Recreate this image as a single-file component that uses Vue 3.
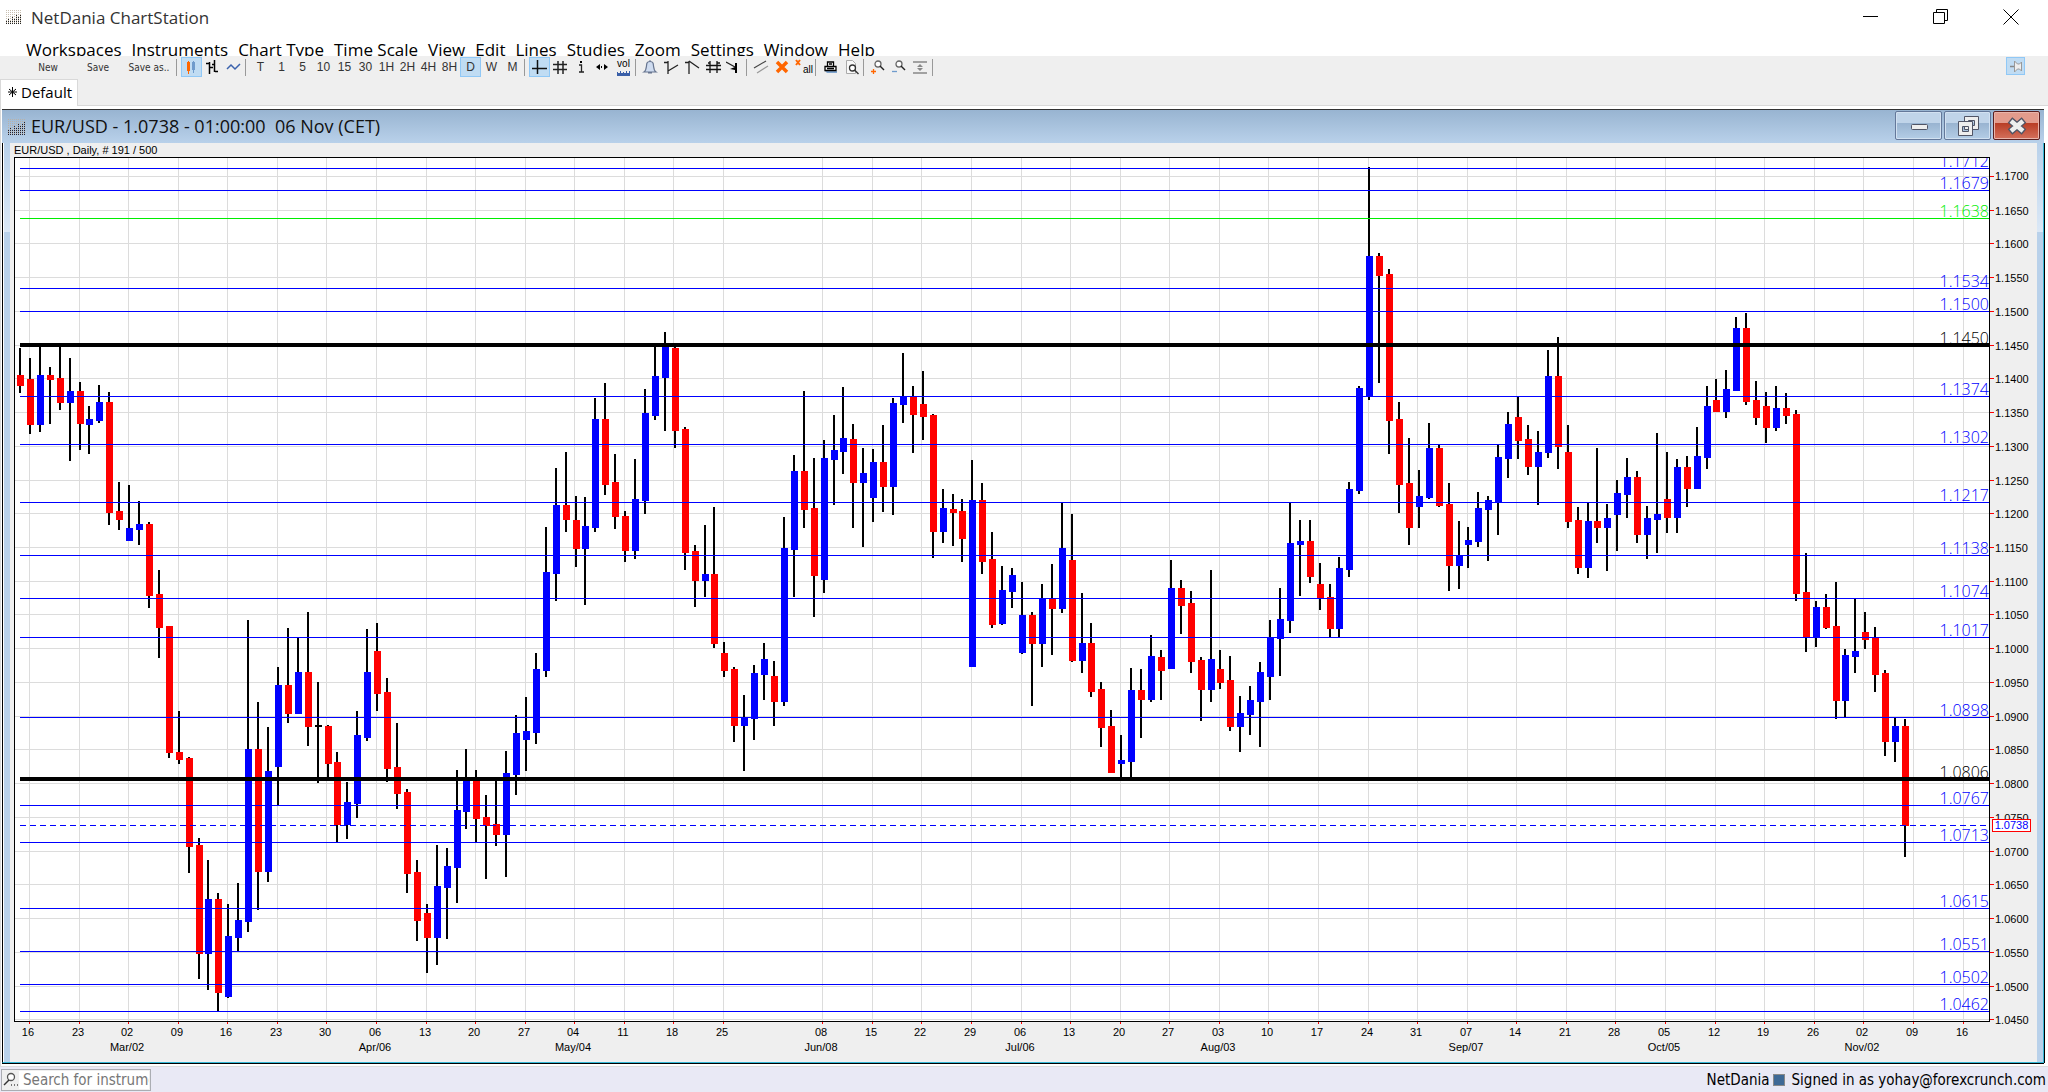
<script setup>
import { ref } from 'vue'

const menus = ['Workspaces', 'Instruments', 'Chart Type', 'Time Scale', 'View', 'Edit', 'Lines', 'Studies', 'Zoom', 'Settings', 'Window', 'Help']
const scales = ['T', '1', '5', '10', '15', '30', '1H', '2H', '4H', '8H', 'D', 'W', 'M']
const scale = ref('D')
const search = ref('')

// dotted bars of the application logo
const logoBars = [3, 5, 4, 7, 6, 9, 8, 9]

// plot area in chart units
const plot = { left: 15, top: 158, width: 1974, height: 863 }
const viewBox = `${plot.left} ${plot.top} ${plot.width} ${plot.height}`

const priceY = (price) => Math.round(176 + (1.17 - price) * 6746)
const candleX = (i) => Math.floor(19.5 + i * 9.921)
const weekX = (k) => Math.floor(29.42 + k * 49.58)
const topPct = (y) => ((y - plot.top) / plot.height) * 100 + '%'
const bottomPct = (y) => ((plot.top + plot.height - y) / plot.height) * 100 + '%'
const leftPct = (x) => ((x - plot.left) / plot.width) * 100 + '%'

const ticks = []
for (let p = 11700; p >= 10450; p -= 50) {
  ticks.push({ label: (p / 10000).toFixed(4), y: priceY(p / 10000) })
}

const days = '16 23 02 09 16 23 30 06 13 20 27 04 11 18 25 01 08 15 22 29 06 13 20 27 03 10 17 24 31 07 14 21 28 05 12 19 26 02 09 16'.split(' ')
const months = { 2: 'Mar/02', 7: 'Apr/06', 11: 'May/04', 16: 'Jun/08', 20: 'Jul/06', 24: 'Aug/03', 29: 'Sep/07', 33: 'Oct/05', 37: 'Nov/02' }
// the first week of June carries no grid line
const weeks = days
  .map((day, k) => ({ day, month: months[k], x: weekX(k), k }))
  .filter((w) => w.k !== 15)

const levels = [
  1.1712, 1.1679, 1.1638, 1.1534, 1.15, 1.145, 1.1374, 1.1302, 1.1217, 1.1138, 1.1074,
  1.1017, 1.0898, 1.0806, 1.0767, 1.0713, 1.0615, 1.0551, 1.0502, 1.0462
].map((price) => ({
  label: price.toFixed(4),
  y: priceY(price),
  kind: price === 1.1638 ? 'green' : price === 1.145 || price === 1.0806 ? 'major' : 'blue'
}))

const last = { label: '1.0738', y: 825 }

// direction, high, body top, body bottom, low
const candles = `
r 348 375 386 393|r 358 379 425 434|b 345 375 425 432|r 367 375 380 424|r 345 378 403 410
b 358 391 403 461|r 382 391 424 450|b 406 419 425 454|b 385 402 421 423|r 392 402 513 525
r 482 511 520 530|b 485 528 541 541|b 501 524 530 545|r 522 524 596 608|r 570 594 628 658
r 626 626 753 758|r 711 752 760 764|r 757 758 847 873|r 838 845 954 979|b 860 899 954 990
r 893 899 993 1011|b 904 936 997 998|b 883 920 938 951|b 620 749 922 932|r 702 749 872 910
b 727 771 872 882|b 667 685 767 805|r 628 685 714 723|b 637 672 714 714|r 612 672 727 746
k 682 725 727 783|r 725 726 764 778|r 752 762 825 842|b 782 802 825 839|b 711 735 804 818
b 629 672 738 741|r 623 651 694 711|r 678 692 769 782|r 723 767 794 809|r 789 792 874 893
r 860 872 921 941|r 904 913 938 973|b 845 886 938 965|b 848 866 888 939|b 770 810 868 903
b 749 780 812 829|r 770 780 819 842|r 795 817 826 879|r 780 824 835 846|b 751 773 835 877
b 715 733 775 795|b 697 731 740 771|b 653 669 733 744|b 527 572 671 677|b 468 505 574 601
r 452 505 520 532|r 496 520 549 567|b 497 526 549 605|b 398 419 528 532|r 383 419 485 495
r 454 482 517 529|r 511 516 551 562|b 459 499 551 559|b 389 413 501 514|b 347 376 416 420
b 332 346 378 431|r 347 348 431 448|r 427 429 553 570|r 545 551 581 607|b 525 574 581 597
r 507 574 644 648|r 642 653 671 677|r 667 669 726 742|b 695 717 726 771|b 665 673 719 740
b 643 659 675 700|r 661 676 702 726|b 517 548 702 706|b 455 471 550 597|r 391 471 510 528
r 458 508 576 617|b 440 458 580 593|b 415 450 460 505|b 387 438 452 474|r 424 439 483 528
b 448 473 483 547|b 449 462 498 522|r 425 462 487 512|b 398 403 487 515|b 353 396 405 423
r 386 396 415 453|r 371 404 417 440|r 414 415 532 558|b 489 508 532 543|r 494 509 513 546
r 499 511 539 562|b 460 500 667 667|r 483 500 562 574|r 532 559 625 628|b 566 590 624 625
b 568 575 592 608|b 582 615 653 654|r 612 615 644 706|b 584 598 644 667|r 564 598 609 655
b 503 548 609 613|r 514 560 661 662|b 593 643 661 673|r 623 643 692 697|r 682 689 728 747
r 710 726 773 773|b 735 760 764 778|b 668 690 762 778|r 669 690 700 738|b 635 656 700 702
r 650 657 671 700|b 560 588 669 669|r 580 588 606 634|r 591 603 662 673|r 657 660 690 721
b 570 659 690 702|r 650 669 683 689|r 656 680 727 731|b 696 713 727 752|b 686 700 715 735
b 662 672 702 747|b 620 637 677 700|b 588 619 639 676|b 503 543 621 633|b 520 541 545 596
r 520 541 577 583|r 563 584 598 610|r 584 597 629 637|b 557 568 629 637|b 482 489 570 577
b 386 388 491 494|b 167 256 396 400|r 253 256 276 383|r 269 274 421 454|r 402 419 485 513
r 438 483 528 545|b 470 496 507 528|b 423 448 498 499|r 444 448 506 507|r 483 504 566 591
b 521 555 566 589|b 527 540 545 568|b 492 508 542 547|b 496 500 510 561|b 444 457 502 535
b 412 424 459 478|r 397 417 441 459|r 425 439 467 475|b 431 452 467 505|b 350 376 453 458
r 337 376 447 469|r 425 452 522 528|r 507 520 568 574|b 502 521 568 578|r 448 521 528 543
b 504 518 528 571|b 480 493 515 551|b 458 477 495 518|r 471 477 535 543|b 506 518 535 559
b 433 514 520 553|r 452 499 518 533|b 459 467 518 533|r 456 467 489 507|b 427 456 489 489
b 386 406 458 469|r 379 400 412 412|b 370 389 412 418|b 317 328 391 391|r 313 328 402 405
r 381 400 418 425|r 392 406 428 443|b 386 408 428 431|r 393 408 416 424|r 410 414 594 601
r 553 592 637 652|b 601 607 637 647|r 594 607 628 629|r 582 626 701 719|b 649 655 701 717
b 598 651 657 673|r 612 632 640 649|r 627 637 675 692|r 670 673 742 756|b 717 726 742 762
r 719 726 826 857`
  .trim()
  .split(/[|\n]/)
  .map((row, i) => {
    const [dir, high, top, bottom, low] = row.split(' ')
    return { dir, x: candleX(i), high: +high, top: +top, height: bottom - top, range: low - high }
  })
</script>

<template>
  <div class="app">
    <header class="title-bar">
      <svg class="logo" width="16" height="14" viewBox="0 0 16 14">
        <g v-for="(bar, i) in logoBars" :key="i" stroke-dasharray="1 1">
          <path :d="`M${i * 2 + 0.5} 0V14`" stroke="#c9c0b2" />
          <path :d="`M${i * 2 + 0.5} 14V${14 - bar}`" stroke="#222" />
        </g>
      </svg>
      <h1>NetDania ChartStation</h1>
      <div class="caption-buttons">
        <button aria-label="Minimize"><svg width="16" height="16" viewBox="0 0 16 16"><path d="M0 7.500h15" /></svg></button>
        <button aria-label="Restore"><svg width="16" height="16" viewBox="0 0 16 16"><path d="M.5 3.500h11v11h-11zM3.500 3.500v-3h11v11h-3" /></svg></button>
        <button aria-label="Close"><svg width="16" height="16" viewBox="0 0 16 16"><path d="M.5.5l15 15M15.500.5l-15 15" /></svg></button>
      </div>
    </header>

    <nav class="menu-bar">
      <button v-for="menu in menus" :key="menu">{{ menu }}</button>
    </nav>

    <div class="toolbar">
      <button class="text-btn">New</button>
      <button class="text-btn">Save</button>
      <button class="text-btn">Save as..</button>
      <span class="sep"></span>
      <button class="tool active" aria-label="Candlestick">
        <svg viewBox="0 0 17 16"><path d="M5.500 2v13" stroke="#f60" /><path d="M4 3h3v9H4z" fill="#f60" /><path d="M10.500 2v12" stroke="#6f9bcc" /><path d="M9 3h3v8H9z" fill="#6f9bcc" /></svg>
      </button>
      <button class="tool" aria-label="Bar chart">
        <svg viewBox="0 0 17 16"><path d="M5.500 3v12M2 4.500h3M6 8.500h3M10.500 1v12M8 5.500h2M11 12.500h3" stroke="#000" stroke-width="1.500" fill="none" /></svg>
      </button>
      <button class="tool" aria-label="Line chart">
        <svg viewBox="0 0 17 16"><path d="M2 10L6 6l4 4 5-5" stroke="#3a62ad" stroke-width="1.500" fill="none" /></svg>
      </button>
      <span class="sep"></span>
      <button v-for="s in scales" :key="s" :class="['tool', { active: s === scale }]" @click="scale = s">{{ s }}</button>
      <span class="sep"></span>
      <button class="tool active" aria-label="Crosshair">
        <svg viewBox="0 0 17 16"><path d="M6.500 1v14M1 9.500h15" stroke="#111" stroke-width="1.500" /></svg>
      </button>
      <button class="tool" aria-label="Grid">
        <svg viewBox="0 0 17 16"><path d="M6 2v13M11 2v13M1 5.500h14M1 10.500h14" stroke="#222" stroke-width="1.500" /></svg>
      </button>
      <button class="tool" aria-label="Info">
        <svg viewBox="0 0 17 16"><path d="M6 6h2.500v7M6 13h5" stroke="#222" stroke-width="1.300" fill="none" /><path d="M7 2h2v2H7z" /></svg>
      </button>
      <button class="tool" aria-label="Scroll">
        <svg viewBox="0 0 17 16"><path d="M2 8l4-3v6zM14 8l-4-3v6zM7 7h1v2H7z" /></svg>
      </button>
      <button class="tool" aria-label="Volume">
        <span class="tiny">vol</span>
        <svg class="vol" viewBox="0 0 13 5"><path d="M0 5V1h1v1h2V0h1v2h2V1h1v1h2V0h1v2h2V0h1v5z" fill="#3a5fa8" /></svg>
      </button>
      <span class="sep"></span>
      <button class="tool" aria-label="Alert">
        <svg viewBox="0 0 17 16"><path d="M2 13c3-2 2-6 3-9 1-2 5-2 6 0 1 3 0 7 3 9zM6 14h4" fill="#cfdcf0" stroke="#67758f" stroke-width="1.200" /><path d="M8 1v2" stroke="#67758f" /></svg>
      </button>
      <button class="tool" aria-label="Trend up">
        <svg viewBox="0 0 17 16"><path d="M5 2v13M1 3.500h4M5 12l10-6" stroke="#222" stroke-width="1.300" /></svg>
      </button>
      <button class="tool" aria-label="Trend down">
        <svg viewBox="0 0 17 16"><path d="M5 2v13M1 3.500h4M5 2l10 7" stroke="#222" stroke-width="1.300" /></svg>
      </button>
      <button class="tool" aria-label="Channel">
        <svg viewBox="0 0 17 16"><path d="M5 2v12M12 2v12M1 6.500h15M1 10.500h15M3 4h2M12 4h3" stroke="#111" stroke-width="1.300" /></svg>
      </button>
      <button class="tool" aria-label="Arrow">
        <svg viewBox="0 0 17 16"><path d="M0 3l9 5" stroke="#222" stroke-width="1.300" /><path d="M4 10l5-2V4h2v10H9v-3z" /></svg>
      </button>
      <span class="sep"></span>
      <button class="tool" aria-label="Parallel lines">
        <svg viewBox="0 0 17 16"><path d="M1 9l12-7" stroke="#444" stroke-width="1.200" /><path d="M4 14l11-7" stroke="#999" stroke-width="1.200" /></svg>
      </button>
      <button class="tool" aria-label="Delete">
        <svg viewBox="0 0 17 16"><path d="M3 3l10 10M13 3L3 13" stroke="#f60" stroke-width="3.500" /></svg>
      </button>
      <button class="tool" aria-label="Delete all">
        <svg viewBox="0 0 17 16"><path d="M1 1l4 5M5 1L1 6" stroke="#f60" stroke-width="2" /></svg>
        <span class="all">all</span>
      </button>
      <span class="sep"></span>
      <button class="tool" aria-label="Print">
        <svg viewBox="0 0 17 16"><path d="M3 12h12v2H5z" fill="#7fa5cf" /><path d="M5.500 7V3h6v4M3 7.500h11v4H3zM5 9.500h7M7 5h3" fill="#fff" stroke="#000" stroke-width="1.300" /></svg>
      </button>
      <button class="tool" aria-label="Print preview">
        <svg viewBox="0 0 17 16"><path d="M3.500 1.500h6l3 3v10h-9z" fill="#f8f8f8" stroke="#aaa" /><circle cx="9.500" cy="9" r="3" fill="#fff" stroke="#333" stroke-width="1.300" /><path d="M11.500 11l4 4" stroke="#333" stroke-width="1.500" /></svg>
      </button>
      <span class="sep"></span>
      <button class="tool" aria-label="Zoom in">
        <svg viewBox="0 0 17 16"><circle cx="8" cy="5" r="3" fill="#fff" stroke="#666" stroke-width="1.300" /><path d="M10 7l4 4" stroke="#222" stroke-width="1.500" /><path d="M1 12.500h5M3.500 10v5" stroke="#f60" stroke-width="1.300" /></svg>
      </button>
      <button class="tool" aria-label="Zoom out">
        <svg viewBox="0 0 17 16"><circle cx="8" cy="5" r="3" fill="#fff" stroke="#666" stroke-width="1.300" /><path d="M10 7l4 4" stroke="#222" stroke-width="1.500" /><path d="M1 12.500h5" stroke="#6f9bcc" stroke-width="1.300" /></svg>
      </button>
      <button class="tool" aria-label="Fit">
        <svg viewBox="0 0 17 16"><path d="M1 3h14M1 14h14" stroke="#888" stroke-width="1.500" /><path d="M8 5l3 3H5zM8 12l3-3H5z" fill="#888" /></svg>
      </button>
      <span class="sep"></span>
      <button class="tool active pin" aria-label="Pin">
        <svg viewBox="0 0 17 16"><path d="M3 8.500h4" stroke="#888" stroke-width="1.500" /><path d="M7.500 3v11l3-3h2l2 2V4l-2 2h-2z" fill="#eee" stroke="#999" /></svg>
      </button>
    </div>

    <div class="tabs">
      <button class="tab"><svg width="9" height="10" viewBox="0 0 9 10"><path d="M4.500 0v10M0 5h9M1 2l7 6M8 2L1 8" stroke="#000" /></svg>Default</button>
    </div>

    <main class="desktop">
      <section class="chart-window">
        <div class="chart-title">
          <svg class="logo" width="18" height="16" viewBox="0 0 18 16">
            <g v-for="(bar, i) in [...logoBars, 12]" :key="i" stroke-dasharray="1 1">
              <path :d="`M${i * 2 + 0.5} 0V16`" stroke="#b9b2a8" />
              <path :d="`M${i * 2 + 0.5} 16V${14 - bar}`" stroke="#223" />
            </g>
          </svg>
          <h2>EUR/USD - 1.0738 - 01:00:00&nbsp; 06 Nov (CET)</h2>
          <div class="window-buttons">
            <button aria-label="Minimize chart"><svg width="22" height="20" viewBox="0 0 22 20"><rect x="3.500" y="8.500" width="16" height="5" rx="1" fill="#eee" stroke="#515566" /></svg></button>
            <button aria-label="Restore chart">
              <svg width="22" height="20" viewBox="0 0 22 20"><path d="M7.500.5h14v13h-14zM11.500 4.500v5h6v-5z" fill="#eee" fill-rule="evenodd" stroke="#515566" /><path d="M1.500 5.500h14v14h-14zM5.500 10.500v5h6v-5z" fill="#eee" fill-rule="evenodd" stroke="#515566" /></svg>
            </button>
            <button class="close" aria-label="Close chart">
              <svg width="22" height="20" viewBox="0 0 22 20"><path d="M4 4l14 12M18 4L4 16" stroke="#515566" stroke-width="7" /><path d="M5 5l12 10M17 5L5 15" stroke="#eee" stroke-width="4.500" /></svg>
            </button>
          </div>
        </div>

        <div class="frame">
          <div class="chart">
            <p class="info">EUR/USD , Daily, # 191 / 500</p>
            <div class="plot">
              <svg class="layer" :viewBox="viewBox" preserveAspectRatio="none" shape-rendering="crispEdges">
                <rect v-for="w in weeks" :key="'v' + w.k" class="grid" :x="w.x" y="158" width="1" height="863" />
                <rect v-for="t in ticks" :key="'h' + t.label" class="grid" x="15" :y="t.y" width="1974" height="1" />
              </svg>
              <span v-for="l in levels" :key="l.label" :class="['level', l.kind]" :style="{ bottom: bottomPct(l.y) }">{{ l.label }}</span>
              <svg class="layer" :viewBox="viewBox" preserveAspectRatio="none" shape-rendering="crispEdges">
                <g v-for="(c, i) in candles" :key="i">
                  <rect :x="c.x" :y="c.high" width="2" :height="c.range" />
                  <rect :class="c.dir" :x="c.x - 2" :y="c.top" width="7" :height="c.height" />
                </g>
                <rect
                  v-for="l in levels"
                  :key="l.label"
                  :class="l.kind"
                  x="20"
                  :y="l.kind === 'major' ? l.y - 2 : l.y"
                  width="1969"
                  :height="l.kind === 'major' ? 4 : 1"
                />
                <path :d="`M20 ${last.y}.5H1989`" class="last-line" />
              </svg>
            </div>
            <div class="price-axis">
              <span v-for="t in ticks" :key="t.label" class="price" :style="{ top: topPct(t.y) }">{{ t.label }}</span>
              <span class="last-price" :style="{ top: topPct(last.y) }">{{ last.label }}</span>
            </div>
            <div class="time-axis">
              <span v-for="w in weeks" :key="w.k" class="week" :style="{ left: leftPct(w.x) }">{{ w.day }}<br>{{ w.month }}</span>
            </div>
          </div>
        </div>
      </section>
    </main>

    <footer class="status-bar">
      <label class="search">
        <svg width="16" height="16" viewBox="0 0 16 16"><circle cx="8" cy="5" r="3.500" fill="#fff" stroke="#555" stroke-width="1.300" /><path d="M6 8l-5 5" stroke="#333" stroke-width="1.500" /><path d="M8 13h1M11 13h1M14 13h1" stroke="#000" /></svg>
        <input v-model="search" type="text" placeholder="Search for instruments" aria-label="Search for instruments">
      </label>
      <p class="account">NetDania<i class="led"></i>Signed in as yohay@forexcrunch.com</p>
    </footer>
  </div>
</template>

<style>
body {
  margin: 0;
}
</style>

<style scoped>
.app {
  display: flex;
  flex-direction: column;
  min-height: 100vh;
  background: #efefef;
  color: #000;
  font-family: "Open Sans", "Noto Sans", sans-serif;
}

h1,
h2,
p {
  margin: 0;
  font-weight: 400;
}

button {
  padding: 0;
  border: 0;
  background: none;
  color: inherit;
  font-family: inherit;
}

.title-bar {
  display: flex;
  align-items: center;
  height: 34px;
  padding: 0 0 2px 6px;
  background: #fff;
}

.title-bar h1 {
  flex: 1;
  margin-left: 9px;
  color: #333;
  font-size: 17px;
}

.caption-buttons {
  display: flex;
  gap: 54px;
  padding-right: 29px;
}

.caption-buttons button {
  width: 16px;
  height: 16px;
}

.caption-buttons svg {
  display: block;
  fill: none;
  stroke: #000;
}

.menu-bar {
  display: flex;
  gap: 10px;
  height: 20px;
  padding-left: 26px;
  overflow: hidden;
  background: #fff;
}

.menu-bar button {
  height: 28px;
  font-size: 17px;
  line-height: 28px;
}

.toolbar {
  display: flex;
  align-items: flex-start;
  height: 22px;
  padding: 1px 23px 0;
  font-family: "Liberation Sans", Arial, sans-serif;
}

.text-btn {
  width: 50px;
  height: 20px;
  color: #333;
  font-family: "DejaVu Sans Condensed", sans-serif;
  font-size: 10px;
}

.text-btn:nth-child(3) {
  width: 52px;
}

.tool {
  display: grid;
  place-items: center;
  box-sizing: border-box;
  width: 21px;
  height: 20px;
  border: 1px solid transparent;
  color: #333;
  font-size: 12px;
}

.tool > * {
  grid-area: 1 / 1;
}

.tool svg {
  display: block;
  width: 17px;
  height: 16px;
}

.tool .vol {
  align-self: end;
  width: 13px;
  height: 5px;
}

.tiny {
  align-self: start;
  color: #000;
  font-size: 10px;
  line-height: 12px;
}

.all {
  align-self: end;
  justify-self: end;
  color: #000;
  font-size: 10px;
  line-height: 12px;
}

.tool.active {
  border-color: #90c8f6;
  background: #c0dcf3;
}

.pin {
  width: 19px;
  height: 18px;
  margin-left: auto;
}

.sep {
  width: 1px;
  height: 17px;
  margin: 2px 4px 0 1px;
  background: #999;
}

.tabs {
  display: flex;
  height: 26px;
  border-bottom: 1px solid #d9d9d9;
}

.tab {
  display: flex;
  align-items: center;
  gap: 4px;
  box-sizing: border-box;
  height: 27px;
  padding: 0 5px 2px 7px;
  border: 1px solid #d9d9d9;
  border-bottom: 0;
  background: #fff;
  font-size: 15px;
}

.desktop {
  display: flex;
  flex: 1;
  padding: 3px 4px 2px 1px;
  border-left: 1px solid #d9d9d9;
  background: #fff;
}

.chart-window {
  display: flex;
  flex: 1;
  flex-direction: column;
  border-top: 1px solid #333;
  border-bottom: 1px solid #000;
}

.chart-title {
  display: flex;
  align-items: center;
  height: 33px;
  padding: 0 4px 0 6px;
  background: linear-gradient(#98b4d1, #b9d1ea);
}

.chart-title h2 {
  flex: 1;
  margin-left: 5px;
  padding-bottom: 2px;
  color: #111;
  font-size: 18px;
}

.window-buttons {
  display: flex;
  gap: 2px;
  height: 31px;
}

.window-buttons button {
  display: grid;
  place-items: center;
  box-sizing: border-box;
  width: 47px;
  height: 29px;
  border: 1px solid #64789a;
  border-radius: 2px;
  background: linear-gradient(#c0d4e9 0 40%, #98b3d0 40%, #b4cde6);
  box-shadow: inset 0 0 0 1px #d2e1f1;
}

.window-buttons .close {
  border-color: #5b1f1f;
  background: linear-gradient(#e39b8c 0 40%, #b83c24 40%, #d4705c);
  box-shadow: inset 0 0 0 1px #e9b4aa;
}

.frame {
  display: flex;
  flex: 1;
  padding: 0 6px 0 1px;
  border: solid #35b8d6;
  border-width: 0 1px 1px 0;
  border-left: 1px solid #000;
  background: linear-gradient(#b9d1ea, #dbe8f6 89px, #b9d1ea 89px);
  box-shadow: inset 1px 0 #fff, 1px 0 #000;
}

.chart {
  display: grid;
  flex: 1;
  grid-template-columns: 1fr 47px;
  grid-template-rows: 14px 1fr 40px;
  margin-left: 6px;
  padding-left: 4px;
  background: #efefef;
  font-family: "Liberation Sans", Arial, sans-serif;
  font-size: 11px;
}

.info {
  grid-column: 1 / 3;
  line-height: 14px;
}

.plot {
  position: relative;
  min-height: 400px;
  overflow: hidden;
  border: 1px solid #000;
  background: #fff;
}

.layer {
  position: absolute;
  inset: 0;
  width: 100%;
  height: 100%;
}

.grid {
  fill: #dcdcdc;
}

.r {
  fill: #f00;
}

.b,
rect.blue {
  fill: #00f;
}

rect.green {
  fill: #0e0;
}

.last-line {
  stroke: #00f;
  stroke-dasharray: 6 4;
}

.level {
  position: absolute;
  right: 0;
  font-family: "Open Sans", "Noto Sans", sans-serif;
  font-size: 16px;
  font-weight: 300;
  line-height: 14px;
}

.level.blue {
  color: #00f;
}

.level.green {
  color: #0e0;
}

.price-axis {
  position: relative;
  margin: 1px 0;
}

.price {
  position: absolute;
  left: 0;
  display: flex;
  align-items: center;
  gap: 1px;
  height: 13px;
  margin-top: -6px;
}

.price::before {
  width: 4px;
  height: 1px;
  background: #f00;
  content: "";
}

.last-price {
  position: absolute;
  left: 2px;
  box-sizing: border-box;
  width: 39px;
  height: 13px;
  margin-top: -6px;
  border: 1px solid #f00;
  background: #fff;
  color: #00f;
  line-height: 11px;
  text-align: center;
}

.time-axis {
  position: relative;
  margin: 0 1px;
}

.week {
  position: absolute;
  width: 50px;
  margin-left: -26px;
  padding-top: 3px;
  line-height: 15px;
  text-align: center;
}

.week::before {
  position: absolute;
  top: 0;
  left: 26px;
  width: 1px;
  height: 2px;
  background: #f00;
  content: "";
}

.status-bar {
  display: flex;
  align-items: center;
  justify-content: space-between;
  height: 25px;
  padding: 0 2px 0 1px;
  border-top: 1px solid #ddd;
  background: #e9e9f5;
  font-family: "DejaVu Sans Condensed", "Noto Sans", sans-serif;
  font-size: 15px;
}

.search {
  display: flex;
  align-items: center;
  box-sizing: border-box;
  width: 150px;
  height: 22px;
  padding: 1px;
  border: 1px solid #abadb3;
  background: #efefef;
}

.search input {
  flex: 1;
  min-width: 0;
  height: 18px;
  padding: 0 0 0 4px;
  border: 0;
  background: #fff;
  font: inherit;
}

.search input::placeholder {
  color: #777;
}

.account {
  display: flex;
  align-items: center;
}

.led {
  width: 10px;
  height: 10px;
  margin: 0 7px 0 3px;
  border: 1px solid #8a8a8a;
  background: #3f6a96;
}
</style>
